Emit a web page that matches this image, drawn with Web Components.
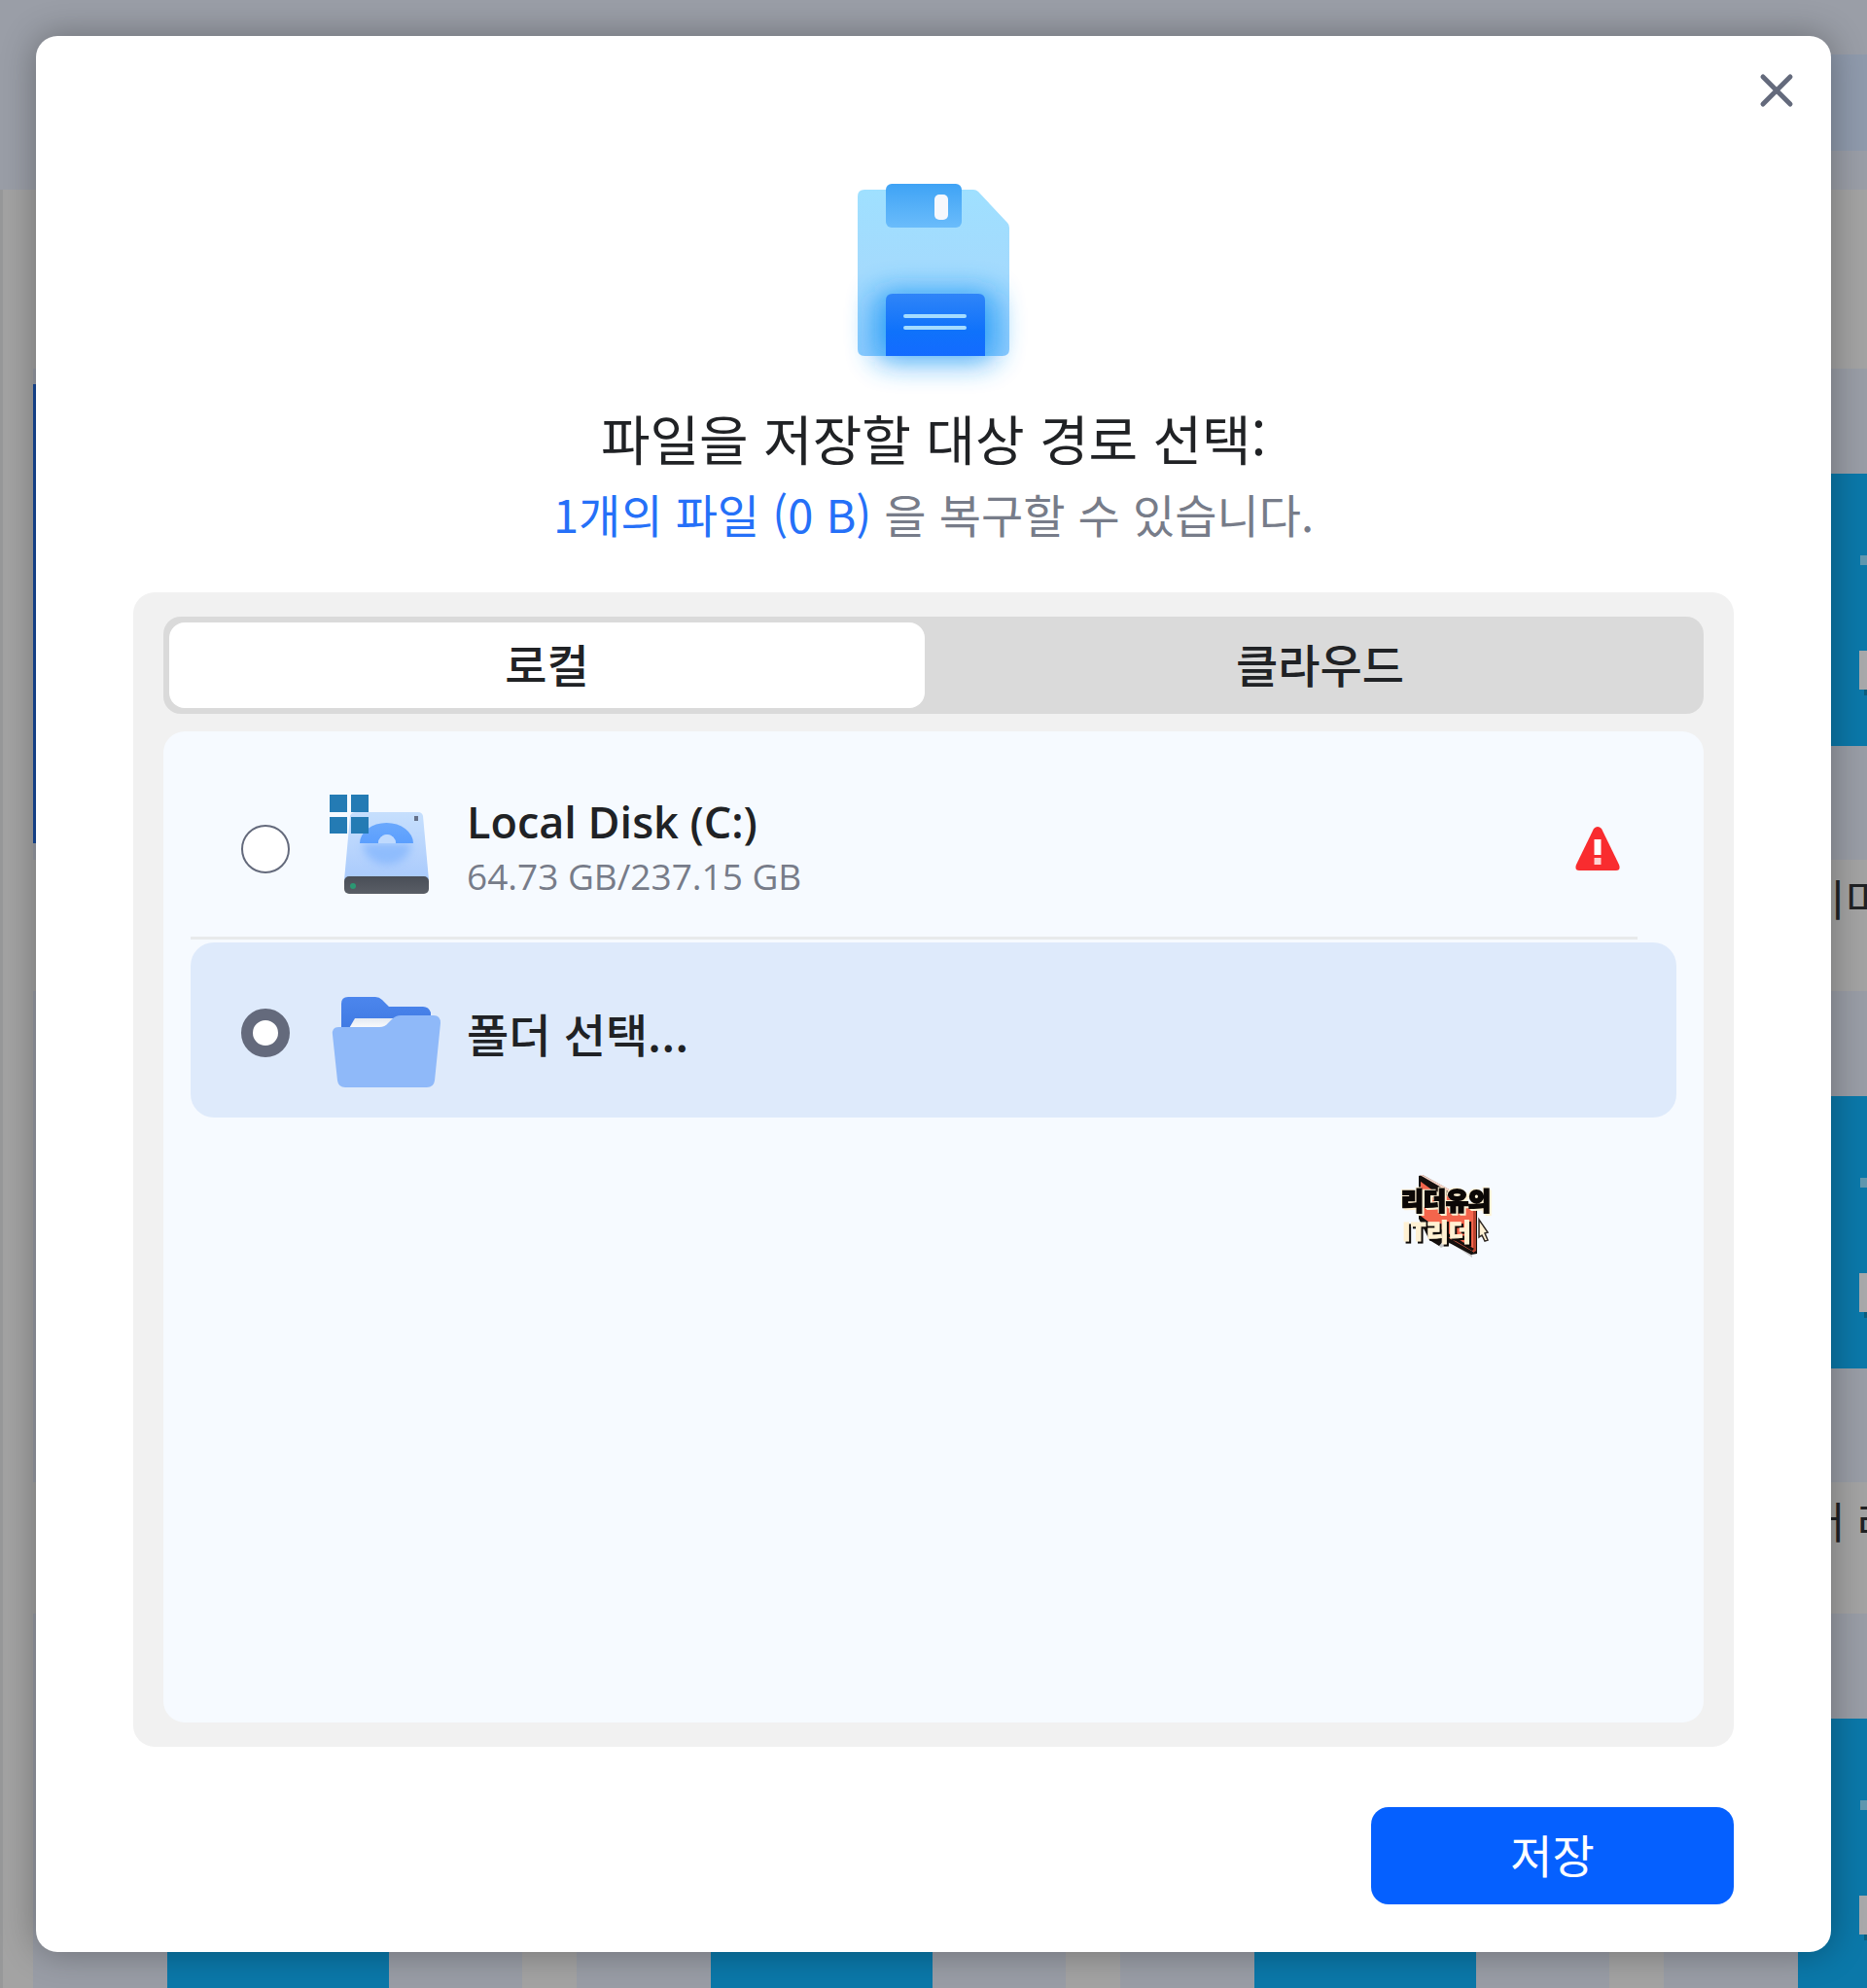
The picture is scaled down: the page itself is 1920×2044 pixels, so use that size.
<!DOCTYPE html>
<html lang="ko">
<head>
<meta charset="utf-8">
<title>저장 경로 선택</title>
<style>
  :root {
    --ink: #202225;
    --muted: #777c89;
    --slate: #646a7c;
    --blue: #0560ff;
  }
  body { margin: 0; font-family: "Open Sans", "Noto Sans CJK KR", sans-serif; color: var(--ink); }
</style>
</head>
<body>
<save-screen></save-screen>
<script>
const define = (name, html, setup) => {
  const template = document.createElement('template');
  template.innerHTML = html;
  customElements.define(name, class extends HTMLElement {
    constructor() {
      super();
      this.attachShadow({ mode: 'open' }).append(template.content.cloneNode(true));
    }
    connectedCallback() { if (setup) setup(this, this.shadowRoot); }
  });
};

/* One thumbnail card of the results grid behind the dialog */
define('file-card', `
  <style>
    :host { display: block; box-sizing: border-box; background: #a3a3a3; }
    .thumb { height: 505px; box-sizing: border-box; padding-top: 108px; background: #999da6; }
    :host([selected]) .thumb { background: linear-gradient(#174a9c, #174a9c) 0 16px / 4px 472px no-repeat #999da6; }
    svg { display: block; width: 228px; height: 280px; margin: 0 auto; }
    .caption { height: 134px; line-height: 82px; font-size: 44px; padding-left: 146px; white-space: nowrap; overflow: hidden; }
  </style>
  <div class="thumb">
    <svg viewBox="0 0 228 280" aria-hidden="true">
      <path fill="#0b78a9" d="M0 0h228v280H0z"/>
      <path fill="#6098b0" d="M64 84h100v10H64z"/>
      <path fill="#a9a9ab" d="M63 182h102v40H63z"/>
      <path fill="#0a5f80" d="M68 222h92v6H68z"/>
    </svg>
  </div>
  <div class="caption"><slot></slot></div>
`);

define('results-backdrop', `
  <style>
    :host { display: flex; flex-direction: column; overflow: hidden; background: #a3a3a3; }
    header { flex: none; height: 195px; box-sizing: border-box; padding-top: 56px; background: #9a9ea7; }
    .field { height: 99px; width: 120px; margin-left: auto; background: #8f9aac; }
    main { flex: none; border-left: 3px solid #979899; padding: 184px 0 0 31px; display: grid;
           grid-template-columns: repeat(4, 503px); gap: 1px 56px; }
  </style>
  <header><div class="field"></div></header>
  <main>
    <file-card selected></file-card><file-card></file-card><file-card></file-card><file-card>이미지</file-card>
    <file-card></file-card><file-card></file-card><file-card></file-card><file-card>더 리더</file-card>
    <file-card></file-card><file-card></file-card><file-card></file-card><file-card></file-card>
  </main>
`);

define('floppy-art', `
  <style>:host { display: block; } svg { display: block; width: 240px; height: 268px; margin: 0 auto; }</style>
  <svg viewBox="840 149 240 268" aria-hidden="true">
    <defs>
      <linearGradient id="body" x1="0" y1="0" x2="0" y2="1"><stop offset="0" stop-color="#9fe0ff"/><stop offset=".5" stop-color="#a4dafd"/><stop offset="1" stop-color="#8ecbfd"/></linearGradient>
      <linearGradient id="tab" x1="0" y1="0" x2="0" y2="1"><stop offset="0" stop-color="#3fa3f5"/><stop offset="1" stop-color="#6abcfb"/></linearGradient>
      <linearGradient id="label" x1="0" y1="0" x2="0" y2="1"><stop offset="0" stop-color="#2f85f8"/><stop offset=".6" stop-color="#0f72fb"/><stop offset="1" stop-color="#136bff"/></linearGradient>
      <filter id="soft" x="-60%" y="-80%" width="220%" height="260%"><feGaussianBlur stdDeviation="15"/></filter>
    </defs>
    <path fill="url(#body)" d="M889 195h112q3 0 5 2l30 32q2 2 2 5v125q0 7-7 7H889q-7 0-7-7V202q0-7 7-7z"/>
    <rect x="900" y="300" width="124" height="72" rx="14" fill="#1f99f6" opacity=".85" filter="url(#soft)"/>
    <rect x="911" y="189" width="78" height="45" rx="6" fill="url(#tab)"/>
    <rect x="961" y="200" width="14" height="26" rx="5" fill="#f6f8fd"/>
    <path fill="url(#label)" d="M911 366v-57q0-7 7-7h88q7 0 7 7v57z"/>
    <path stroke="#a4dcff" stroke-width="4" stroke-linecap="round" d="M931 325h61M931 337h61"/>
  </svg>
`);

define('disk-art', `
  <style>:host { display: block; } svg { display: block; width: 120px; height: 120px; }</style>
  <svg viewBox="338 813 120 120" aria-hidden="true">
    <defs>
      <linearGradient id="case" x1="0" y1="0" x2="0" y2="1"><stop offset="0" stop-color="#c6dffd"/><stop offset=".6" stop-color="#b6d3fd"/><stop offset="1" stop-color="#a9cafc"/></linearGradient>
      <linearGradient id="dome" x1="0" y1="0" x2="0" y2="1"><stop offset="0" stop-color="#6aa8fd"/><stop offset="1" stop-color="#5b9ffe"/></linearGradient>
      <linearGradient id="bar" x1="0" y1="0" x2="0" y2="1"><stop offset="0" stop-color="#494e57"/><stop offset="1" stop-color="#5a5e66"/></linearGradient>
      <filter id="blur" x="-30%" y="-30%" width="160%" height="160%"><feGaussianBlur stdDeviation="4"/></filter>
    </defs>
    <path fill="url(#case)" d="M366 835h64q4 0 5 4l6 66h-87l6-66q1-4 6-4z"/>
    <path fill="#82b5fd" opacity=".75" filter="url(#blur)" d="M373 867h50a25 22 0 0 1-50 0z"/>
    <path fill="url(#dome)" d="M370 867a27.500 21 0 0 1 55 0h-18a9 9 0 0 0-18 0z"/>
    <path fill="#bfdafe" d="M389 867a9 9 0 0 1 18 0z"/>
    <path fill="#65718a" d="M426 839h4v5h-4z"/>
    <rect x="354" y="901" width="87" height="18" rx="5" fill="url(#bar)"/>
    <circle cx="363" cy="911" r="3" fill="#2b9873"/>
    <path fill="#247bb4" d="M339 817h18v18h-18zM361 817h18v18h-18zM339 840h18v17h-18zM361 840h18v17h-18z"/>
  </svg>
`);

define('folder-art', `
  <style>:host { display: block; } svg { display: block; width: 120px; height: 120px; }</style>
  <svg viewBox="338 1002 120 120" aria-hidden="true">
    <defs>
      <linearGradient id="back" x1="0" y1="0" x2="0" y2="1"><stop offset="0" stop-color="#4c86ed"/><stop offset="1" stop-color="#3b75df"/></linearGradient>
      <linearGradient id="paper" x1="0" y1="0" x2="0" y2="1"><stop offset="0" stop-color="#e3e9f2"/><stop offset="1" stop-color="#fff"/></linearGradient>
    </defs>
    <path fill="url(#back)" d="M351 1070v-38q0-7 7-7h28q4 0 7 3l7 7h35q6 0 8 6v20z"/>
    <path fill="url(#paper)" d="M365 1047h41v12h-48z"/>
    <path fill="#8fb9f9" d="M348 1056h42q6 0 9-4l4-4q4-4 9-4h34q7 0 7 8l-6 59q-1 7-8 7h-84q-7 0-8-7l-5-47q-1-8 6-8z"/>
  </svg>
`);

define('warning-mark', `
  <style>:host { display: block; } svg { display: block; width: 46px; height: 46px; }</style>
  <svg viewBox="0 0 46 46" role="img" aria-label="경고">
    <path fill="#f92c2f" d="M19 2q4-4 8 0l18 37q2 6-3 6H4q-5 0-3-6z"/>
    <path fill="#fff" d="M19.500 13h7v16h-7z"/><path fill="#ffd3d3" d="M19.500 32h7v7h-7z"/>
  </svg>
`);

define('path-option', `
  <style>
    :host { display: block; }
    label { display: flex; align-items: center; min-height: 180px; box-sizing: border-box; padding: 0 58px 0 52px; border-radius: 24px; }
    :host([folder]) label { padding-top: 6px; }
    label:has(input:checked) { background: #deeafb; }
    input { appearance: none; flex: none; width: 50px; height: 50px; margin: 0 40px 0 0; border: 2px solid var(--slate); border-radius: 50%; background: #fff; }
    input:checked { border-width: 12px; }
    .text { flex: 1; margin-left: 22px; line-height: 56px; }
    .name { display: block; font-size: 45px; font-weight: 600; }
    :host([folder]) .name { font-size: 47px; font-weight: 500; font-family: "Noto Sans CJK KR", sans-serif; }
    ::slotted([slot=detail]) { display: block; font-size: 37px; color: var(--muted); }
  </style>
  <label>
    <input type="radio" name="path">
    <slot name="icon"></slot>
    <span class="text"><span class="name"><slot></slot></span><slot name="detail"></slot></span>
    <slot name="status"></slot>
  </label>
`, (host, root) => {
  const input = root.querySelector('input');
  input.checked = host.hasAttribute('checked');
  input.onchange = () => {
    for (const other of host.parentNode.querySelectorAll('path-option'))
      if (other !== host) other.shadowRoot.querySelector('input').checked = false;
  };
});

define('segment-tabs', `
  <style>
    :host { display: flex; height: 100px; box-sizing: border-box; padding: 6px; border-radius: 18px; background: #dadada; }
    button { flex: 1; border: 0; border-radius: 16px; background: none; padding: 0 0 4px; color: var(--ink);
             font: 500 47px/84px "Noto Sans CJK KR", sans-serif; }
    button[aria-selected=true] { background: #fff; }
    div { display: flex; flex: 1; gap: 18px; }
  </style>
  <div role="tablist">
    <button role="tab" aria-selected="true">로컬</button>
    <button role="tab" aria-selected="false">클라우드</button>
  </div>
`);

define('reader-stamp', `
  <style>
    :host { display: block; }
    svg { display: block; width: 100px; height: 92px; }
    text { font-family: "Noto Sans CJK KR", sans-serif; font-weight: 900; font-size: 25px; }
    .top { fill: #0c0806; stroke: #0c0806; stroke-width: 2px; filter: drop-shadow(2px 2px 0 #fff1d3) drop-shadow(-1px -1px 0 #fff1d3); }
    .bottom { fill: #fff1d3; stroke: #fff1d3; stroke-width: 1px; filter: drop-shadow(2px 2px 0 #0c0806); }
  </style>
  <svg viewBox="1438 1205 100 92">
    <path fill="#c9c9ca" d="M1470 1272l12 10 10-5 22 15v-10l-22-12z"/>
    <path fill="#15100e" d="M1459 1208l4-1 38 21 18 14v46l-6 1-28-15-5 6-10-6-11-22z"/>
    <path fill="#f7d3c6" d="M1460 1207l3 0 37 20-2 2z"/>
    <path fill="#f4654c" d="M1461 1213l54 31v42l-30-17-24-20z"/>
    <path fill="#b9432f" d="M1515 1244l3-2v43l-3 2z"/>
    <path stroke="#15100e" stroke-width="3" fill="none" d="M1461 1252l54 32M1461 1212l22 16"/>
    <text class="top" x="1441" y="1243">리더유의</text>
    <text class="bottom" x="1442" y="1275">IT리더</text>
    <path fill="#fff1d3" stroke="#332c27" stroke-width="1.500" d="M1521 1253v18l3-2 3 6 3-1-3-7 3-1z"/>
  </svg>
`);

define('save-dialog', `
  <style>
    :host { position: relative; display: flex; flex-direction: column; background: #fff; border-radius: 22px;
            box-shadow: 0 0 36px rgba(0, 0, 0, .32); padding: 0 100px 49px; box-sizing: border-box; }
    header { display: flex; justify-content: flex-end; align-items: center; height: 112px; margin-right: -72px; }
    .close { width: 56px; height: 56px; border: 0; padding: 0; background: none; }
    .close svg { display: block; margin: auto; width: 36px; height: 36px; }
    h1 { margin: 0 0 14px; font: 400 55px/64px "Noto Sans CJK KR", sans-serif; text-align: center; }
    p { margin: 0 0 48px; font-size: 47px; line-height: 66px; text-align: center; color: var(--muted); font-family: "Noto Sans CJK KR", sans-serif; }
    p span { color: #2570f8; }
    .panel { flex: 1; display: flex; flex-direction: column; gap: 18px; padding: 25px 31px; border-radius: 22px; background: #f1f1f1; }
    .list { position: relative; flex: 1; padding: 31px 28px; border-radius: 22px; background: #f6faff; }
    hr { border: 0; height: 3px; margin: 0 40px 3px 0; background: #e8eaeb; }
    reader-stamp { position: absolute; right: 214px; top: 454px; }
    footer { display: flex; justify-content: flex-end; margin-top: 62px; }
    .save { width: 373px; height: 100px; border: 0; border-radius: 18px; background: var(--blue); color: #fff;
            font: 400 47px/96px "Noto Sans CJK KR", sans-serif; padding: 0 0 4px; }
  </style>
  <header>
    <button class="close" aria-label="닫기">
      <svg viewBox="0 0 36 36"><path d="M4 4l28 28M32 4L4 32" stroke="#646a7c" stroke-width="5" stroke-linecap="round"/></svg>
    </button>
  </header>
  <floppy-art></floppy-art>
  <h1>파일을 저장할 대상 경로 선택:</h1>
  <p><span>1개의 파일 (0 B)</span> 을 복구할 수 있습니다.</p>
  <section class="panel">
    <segment-tabs></segment-tabs>
    <div class="list">
      <path-option><disk-art slot="icon"></disk-art>Local Disk (C:)<span slot="detail">64.73 GB/237.15 GB</span><warning-mark slot="status"></warning-mark></path-option>
      <hr>
      <path-option folder checked><folder-art slot="icon"></folder-art>폴더 선택...</path-option>
      <reader-stamp></reader-stamp>
    </div>
  </section>
  <footer><button class="save">저장</button></footer>
`);

define('save-screen', `
  <style>
    :host { position: relative; display: flex; min-height: 100vh; box-sizing: border-box; padding: 37px; overflow: hidden; }
    results-backdrop { position: absolute; inset: 0; }
    save-dialog { flex: 1; }
  </style>
  <results-backdrop aria-hidden="true"></results-backdrop>
  <save-dialog role="dialog" aria-modal="true"></save-dialog>
`);
</script>
</body>
</html>
